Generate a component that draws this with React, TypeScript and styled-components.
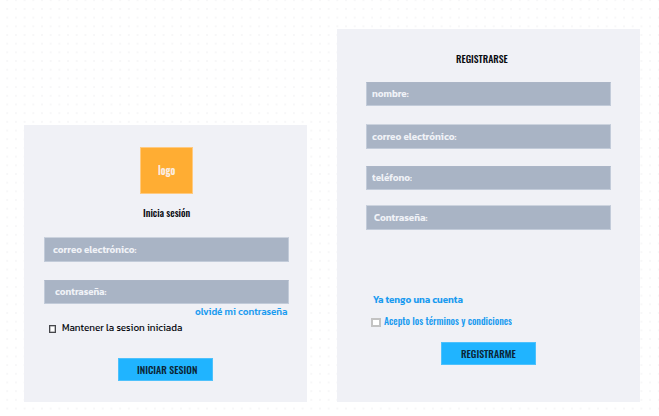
import React, { useLayoutEffect, useRef, useState } from "react";
import styled, { createGlobalStyle } from "styled-components";

const GlobalStyle = createGlobalStyle`
  * { box-sizing: border-box; }
  body { margin: 0; background: #fff; overflow: hidden; }
`;

const Board = styled.main`
  display: flex;
  align-items: flex-end;
  gap: 30px;
  width: 659px;
  height: 416px;
  padding: 0 19px 14px 24px;
  background-image: conic-gradient(from 90deg at 6.7px 6.7px, #f7f7f8 25%, #fff 0);
  background-size: 8.7px 8.7px;
  background-position: -0.5px 1.2px;
`;

const Card = styled.form<{ $width: number; $height: number }>`
  display: flex;
  flex-direction: column;
  width: ${(p) => p.$width}px;
  height: ${(p) => p.$height}px;
  background: #f0f1f6;
`;

const Logo = styled.div`
  display: flex;
  align-items: center;
  justify-content: center;
  width: 53px;
  height: 47px;
  margin: 22px 0 0 116px;
  padding-top: 1px;
  border: 1px solid #ffca80;
  background: #ffad33;
`;

const Row = styled.div<{ $top: number; $left: number }>`
  display: flex;
  align-items: center;
  height: 16px;
  margin: ${(p) => p.$top}px 0 0 ${(p) => p.$left}px;
`;

const Field = styled.label<{ $top: number; $left: number; $height?: number; $indent: number }>`
  display: flex;
  align-items: center;
  width: 245px;
  height: ${(p) => p.$height ?? 24}px;
  margin: ${(p) => p.$top}px 0 0 ${(p) => p.$left}px;
  padding-left: ${(p) => p.$indent}px;
  border: 1px solid #c2cbd9;
  border-top-color: ${(p) => (p.$height === 25 ? "#ccd3de" : "#abb5c6")};
  background: #a9b4c5;
`;

const Action = styled.button<{ $top: number; $left: number; $indent: number }>`
  display: flex;
  align-items: center;
  width: 95px;
  height: 23px;
  margin: ${(p) => p.$top}px 0 0 ${(p) => p.$left}px;
  padding: 0 0 0 ${(p) => p.$indent}px;
  border: 1px solid #4dc1fc;
  background: #20b4ff;
`;

const LoginCheck = styled.span`
  flex: none;
  width: 7px;
  height: 8px;
  margin: 2px 6px 0 0;
  border: 1px solid #46474b;
  background: #fff;
  box-shadow: inset 0 0 0 0.5px #85868a;
`;

const TermsCheck = styled.span`
  flex: none;
  width: 10px;
  height: 9px;
  margin: 3px 3px 0 0;
  border: 2px solid #c3c3c3;
  background: #fff;
`;

const Slot = styled.span<{ $width: number }>`
  display: block;
  flex: none;
  width: ${(p) => p.$width}px;
  height: 16px;
`;

type Face = "narrow" | "wide";

const Glyphs = styled.span<{ $face: Face; $color: string; $size: number; $weight: number }>`
  display: block;
  width: max-content;
  white-space: nowrap;
  transform-origin: left center;
  font-family: ${(p) =>
    p.$face === "narrow" ? `Oswald, Roboto, "Liberation Sans", sans-serif` : `Kanit, "Noto Sans", sans-serif`};
  font-size: ${(p) => p.$size}px;
  font-weight: ${(p) => p.$weight};
  line-height: ${(p) => (p.$face === "narrow" ? 15 : 16)}px;
  color: ${(p) => p.$color};
`;

interface LabelProps {
  width: number;
  color: string;
  face?: Face;
  size?: number;
  weight?: number;
  children: string;
}

// Condenses its text horizontally so that it fills the given width.
function Label({ width, color, face = "wide", size = 10, weight = 600, children }: LabelProps) {
  const ref = useRef<HTMLSpanElement>(null);
  const [scale, setScale] = useState(1);
  useLayoutEffect(() => {
    if (ref.current) setScale(width / ref.current.offsetWidth);
  }, [width, children]);
  return (
    <Slot $width={width}>
      <Glyphs
        ref={ref}
        $face={face}
        $color={color}
        $size={size}
        $weight={weight}
        style={{ transform: `scaleX(${scale})` }}
      >
        {children}
      </Glyphs>
    </Slot>
  );
}

const INK = "#080a10";
const PALE = "#f0f2f7";
const LINK = "#1a9bf0";

export default function App() {
  return (
    <>
      <GlobalStyle />
      <Board>
        <Card $width={283} $height={277}>
          <Logo>
            <Label face="narrow" width={17} color="#fbeee4" size={11} weight={700}>logo</Label>
          </Logo>
          <Row $top={11} $left={119}>
            <Label face="narrow" width={47} color={INK} size={10.5} weight={500}>Inicia sesión</Label>
          </Row>
          <Field $top={16} $left={20} $height={25} $indent={8}>
            <Label width={83} color={PALE}>correo electrónico:</Label>
          </Field>
          <Field $top={18} $left={20} $indent={10}>
            <Label width={51} color={PALE}>contraseña:</Label>
          </Field>
          <Row $top={0} $left={171}>
            <Label width={92} color={LINK} weight={500}>olvidé mi contraseña</Label>
          </Row>
          <Row $top={0} $left={25}>
            <LoginCheck />
            <Label width={120} color={INK} weight={400}>Mantener la sesion iniciada</Label>
          </Row>
          <Action type="button" $top={22} $left={94} $indent={18}>
            <Label face="narrow" width={60} color="#0b2536" size={10.5} weight={500}>INICIAR SESION</Label>
          </Action>
        </Card>
        <Card $width={303} $height={373}>
          <Row $top={22} $left={119}>
            <Label face="narrow" width={52} color={INK} size={10.5} weight={500}>REGISTRARSE</Label>
          </Row>
          <Field $top={15} $left={29} $indent={5}>
            <Label width={37} color={PALE}>nombre:</Label>
          </Field>
          <Field $top={18} $left={29} $height={25} $indent={5}>
            <Label width={84} color={PALE}>correo electrónico:</Label>
          </Field>
          <Field $top={17} $left={29} $indent={5}>
            <Label width={40} color={PALE}>teléfono:</Label>
          </Field>
          <Field $top={15} $left={29} $height={25} $indent={7}>
            <Label width={53} color={PALE}>Contraseña:</Label>
          </Field>
          <Row $top={62} $left={36}>
            <Label width={90} color={LINK}>Ya tengo una cuenta</Label>
          </Row>
          <Row $top={5} $left={34}>
            <TermsCheck />
            <Label face="narrow" width={128} color={LINK} size={10.5} weight={500}>Acepto los términos y condiciones</Label>
          </Row>
          <Action type="button" $top={13} $left={104} $indent={19}>
            <Label face="narrow" width={55} color="#0b2536" size={10.5} weight={500}>REGISTRARME</Label>
          </Action>
        </Card>
      </Board>
    </>
  );
}
